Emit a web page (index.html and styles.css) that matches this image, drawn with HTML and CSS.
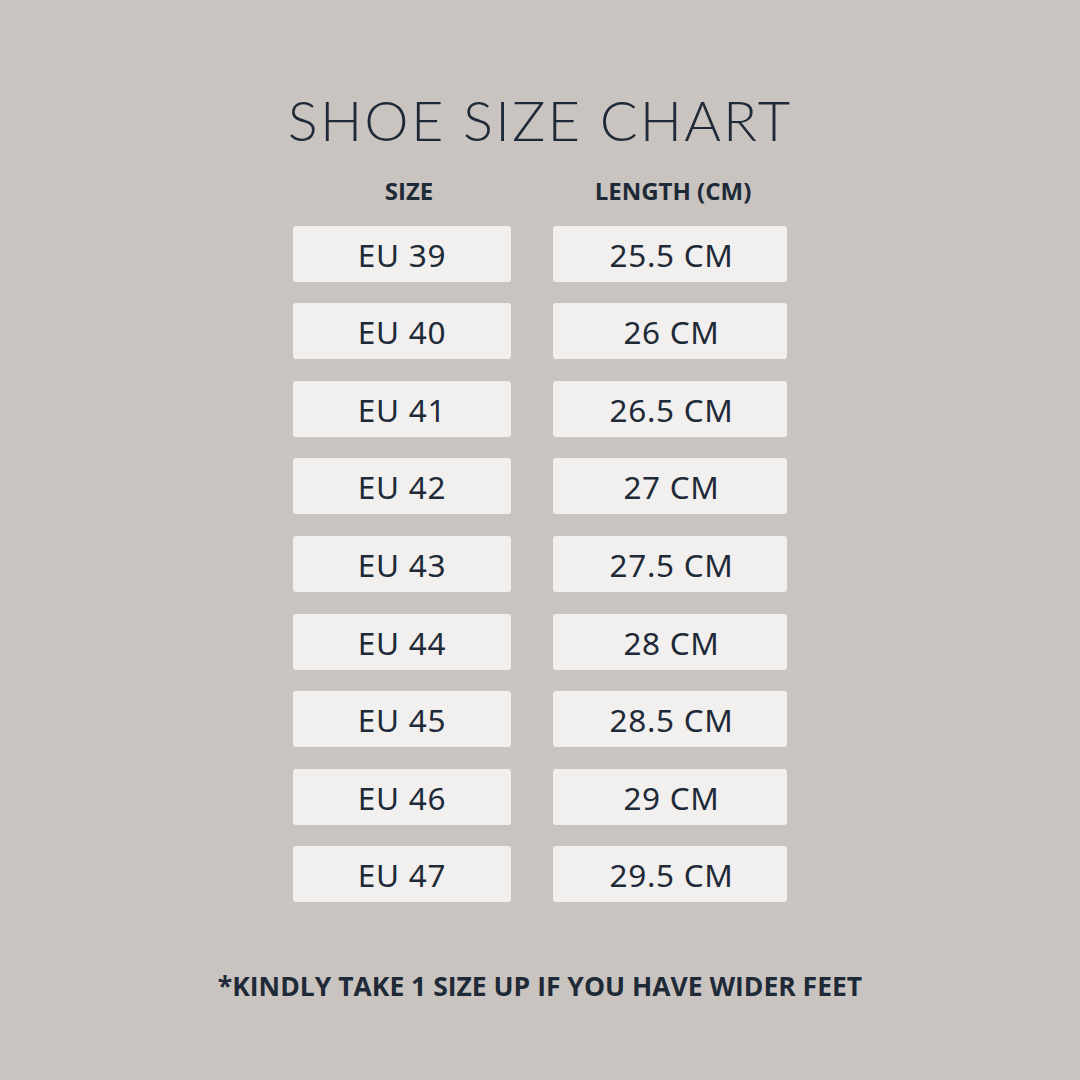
FILE: index.html
```html
<!DOCTYPE html>
<html>
<head>
<meta charset="utf-8">
<link rel="stylesheet" href="styles.css">
</head>
<body>
<main class="page">
  <h1 class="title">SHOE SIZE CHART</h1>
  <div class="chart">
    <div class="head head-size">SIZE</div>
    <div class="head head-len">LENGTH (CM)</div>
    <div class="cell size">EU 39</div><div class="cell len">25.5 CM</div>
    <div class="cell size">EU 40</div><div class="cell len">26 CM</div>
    <div class="cell size">EU 41</div><div class="cell len">26.5 CM</div>
    <div class="cell size">EU 42</div><div class="cell len">27 CM</div>
    <div class="cell size">EU 43</div><div class="cell len">27.5 CM</div>
    <div class="cell size">EU 44</div><div class="cell len">28 CM</div>
    <div class="cell size">EU 45</div><div class="cell len">28.5 CM</div>
    <div class="cell size">EU 46</div><div class="cell len">29 CM</div>
    <div class="cell size">EU 47</div><div class="cell len">29.5 CM</div>
  </div>
  <p class="note">*KINDLY TAKE 1 SIZE UP IF YOU HAVE WIDER FEET</p>
</main>
</body>
</html>
```

FILE: styles.css
```css
html, body {
  margin: 0;
  padding: 0;
}
body {
  width: 1080px;
  height: 1080px;
  background: #c9c4bf;
  color: #1f2a38;
  font-family: "Open Sans", "Liberation Sans", sans-serif;
}
.page {
  display: flex;
  flex-direction: column;
  align-items: center;
  padding-top: 86px;
}
.title {
  margin: 0;
  font-family: "Lato", "Liberation Sans", sans-serif;
  font-weight: 300;
  font-size: 56px;
  line-height: 68px;
  letter-spacing: 2.2px;
}
.chart {
  display: grid;
  grid-template-columns: 218px 234px;
  column-gap: 42px;
  row-gap: 21.6px;
  margin-top: 22px;
}
.head {
  font-weight: 700;
  font-size: 24px;
  line-height: 30px;
  text-align: center;
  margin-bottom: -2px;
}
.head-size { padding-left: 14px; }
.head-len { padding-left: 6px; }
.cell {
  height: 56px;
  background: #f1f0ee;
  border-radius: 3px;
  display: flex;
  align-items: center;
  justify-content: center;
  font-family: "Noto Sans", "Open Sans", sans-serif;
  font-size: 31.5px;
  letter-spacing: 0.7px;
  padding-top: 1px;
  box-sizing: border-box;
}
.len { padding-left: 3px; }
.note {
  margin: 66px 0 0;
  font-weight: 700;
  font-size: 26.5px;
  line-height: 36px;
}
```
